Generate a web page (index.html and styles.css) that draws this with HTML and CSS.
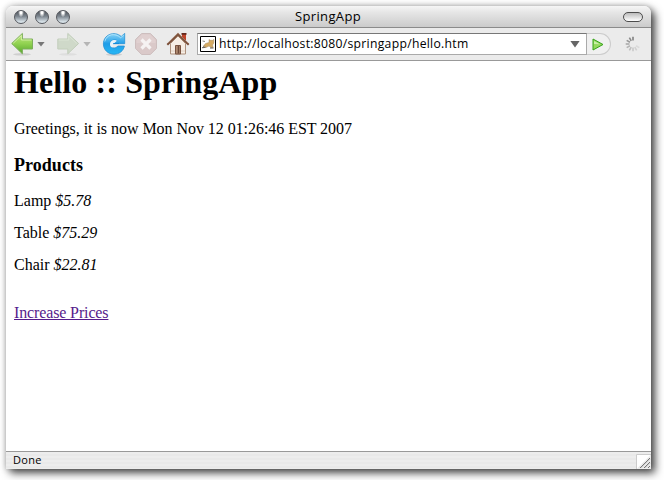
FILE: index.html
```html
<!DOCTYPE html>
<html lang="en">
<head>
<meta charset="utf-8">
<title>SpringApp</title>
<link rel="stylesheet" href="styles.css">
</head>
<body>
<div class="window">
  <header class="titlebar">
    <div class="lights"><i class="light"></i><i class="light"></i><i class="light"></i></div>
    <span class="title">SpringApp</span>
    <i class="pill"></i>
  </header>
  <nav class="toolbar">
    <svg class="icon" viewBox="0 0 24 24">
      <defs><linearGradient id="green" x1="0" y1="0" x2="0" y2="1"><stop offset="0" stop-color="#c5e985"/><stop offset=".5" stop-color="#91d251"/><stop offset="1" stop-color="#56a52c"/></linearGradient></defs>
      <ellipse cx="12" cy="22.3" rx="9" ry="1.2" fill="#cfcfcf"/>
      <path d="M1.7 11.5 12.4 1.4V7H22.5V17H12.4V21.8Z" fill="url(#green)" stroke="#7daf5c"/>
      <path d="M3.2 11.3 11.4 3.5V8H21.5" fill="none" stroke="#dcf3b0" stroke-opacity=".8"/>
    </svg>
    <i class="caret"></i>
    <svg class="icon forward" viewBox="0 0 24 24">
      <ellipse cx="12" cy="22.3" rx="9" ry="1.2" fill="#dedede"/>
      <path d="M22.6 11.5 11.8 1.4V7H1.8V17H11.8V21.8Z" fill="#cfd9c9" stroke="#c2cebb"/>
      <path d="M2.8 8H12.8V3.8L20.8 11.4" fill="none" stroke="#dce5d6"/>
    </svg>
    <i class="caret caret-off"></i>
    <svg class="icon reload" viewBox="0 0 24 24">
      <defs><linearGradient id="blue" x1="0" y1="0" x2="0" y2="1"><stop offset="0" stop-color="#8ad4f6"/><stop offset=".5" stop-color="#1f9de8"/><stop offset="1" stop-color="#27b8f5"/></linearGradient></defs>
      <ellipse cx="12" cy="22.6" rx="8" ry="1.1" fill="#cfcfcf"/>
      <path d="M22.7 1.4V11.7H11.5L15 8.5C12 6.8 8 8.8 8 12.2C8 16.4 14 17.2 15.8 14H22.4C21.4 19 17.2 22.2 12 22.2C6 22.2 1.4 17.8 1.4 12C1.4 2.6 12.2-1.6 19.2 4.5Z" fill="url(#blue)" stroke="#2490d4" stroke-width=".8"/>
      <path d="M2.8 9.5C4.3 2.2 13 .3 18.7 5.8L21.7 3" fill="none" stroke="#c6efff" stroke-opacity=".7"/>
      <path d="M15 8.7C11.6 6.9 8 9 8 12.2C8 14.2 9.2 15.3 10.8 15.6L10.7 13.4C10.7 11.9 12 11.5 13 11.4H11.8Z" fill="#e9f3f9"/>
      <path d="M11.2 11.5H17" stroke="#168ada"/>
    </svg>
    <svg class="icon stop" viewBox="0 0 24 24">
      <path d="M7.6 1.5H16.4L22.5 7.6V16.4L16.4 22.5H7.6L1.5 16.4V7.6Z" fill="#dac9c9" stroke="#cdbebe"/>
      <path d="M7.9 2.5H16L21.5 8V11H2.5V8Z" fill="#e0d0d0"/>
      <path d="M7.5 7.5 16.5 16.5M16.5 7.5 7.5 16.5" stroke="#f6f2f2" stroke-width="3.2"/>
    </svg>
    <svg class="icon home" viewBox="0 0 24 24">
      <path d="M16 1.5H20V9L16 5.5Z" fill="#c0452c"/><path d="M15.5 1H20.5V2.8H15.5Z" fill="#63291e"/>
      <path d="M4.5 11.5 12 4 19.5 11.5V22H4.5Z" fill="#f7eee5" stroke="#ae927e"/>
      <path d="M1.3 12.8 12 2.2 22.7 12.8" fill="none" stroke="#7a4d36" stroke-width="2"/>
      <path d="M2 11 12 1.2 22 11" fill="none" stroke="#b59683" stroke-width=".6"/>
      <path d="M9.5 13.5H14.5V22H9.5Z" fill="#b08a70" stroke="#795340"/><path d="M12.5 14V21.5" stroke="#6d4938" stroke-width="1.5"/>
      <path d="M5 19H9M15 19H19" stroke="#e0cfc0"/>
    </svg>
    <div class="address">
      <svg class="favicon" viewBox="0 0 16 16">
        <path d="M.5.5H15.5V15.5H.5Z" fill="#fff" stroke="#000"/>
        <path d="M2.5 5 5 5.5M2 12 5 9" stroke="#888"/>
        <path d="M3.5 10 5.5 7.5 9 6.5V3.5L10.5 4.3H12.5L13.8 3.4V7L12.5 9 13.2 11.5H11L9 10 6 11.5H3.5L5 10Z" fill="#d5ab65" stroke="#a58a65" stroke-width=".5"/>
        <path d="M2.5 11.8 5.5 11.2M10 12H13.5" stroke="#66615b"/>
      </svg>
      <span class="url">http://localhost:8080/springapp/hello.htm</span>
      <i class="caret dropdown"></i>
    </div>
    <div class="go">
      <svg class="go-icon" viewBox="0 0 12 13"><path d="M1 1 11 6.5 1 12Z" fill="#95d95e" stroke="#36a319"/><path d="M2 3V6L8 6.3Z" fill="#c9efa7"/></svg>
    </div>
    <svg class="spinner" viewBox="-8 -8 16 16" stroke-width="1.6">
      <path d="M0-3.5V-7.3" stroke="#808080"/>
      <path d="M0-3.5V-7.3" stroke="#888" transform="rotate(-30)"/>
      <path d="M0-3.5V-7.3" stroke="#999" transform="rotate(-60)"/>
      <path d="M0-3.5V-7.3" stroke="#aaa" transform="rotate(-90)"/>
      <path d="M0-3.5V-7.3" stroke="#b4b4b4" transform="rotate(-120)"/>
      <path d="M0-3.5V-7.3" stroke="#bebebe" transform="rotate(-150)"/>
      <path d="M0-3.5V-7.3" stroke="#c8c8c8" transform="rotate(180)"/>
      <path d="M0-3.5V-7.3" stroke="#d0d0d0" transform="rotate(150)"/>
      <path d="M0-3.5V-7.3" stroke="#dadada" transform="rotate(120)"/>
    </svg>
  </nav>
  <main class="page">
    <h1>Hello :: SpringApp</h1>
    <p class="greeting">Greetings, it is now Mon Nov 12 01:26:46 EST 2007</p>
    <h3>Products</h3>
    <p class="product">Lamp <i>$5.78</i></p>
    <p class="product">Table <i>$75.29</i></p>
    <p class="product">Chair <i>$22.81</i></p>
    <a class="link" href="#">Increase Prices</a>
  </main>
  <footer class="status">
    <span class="done">Done</span>
    <svg class="grip" viewBox="0 0 15 15"><path d="M.5 15V.5H15" fill="#fff" stroke="#ccc"/><path d="M4 14 14 4M8 14 14 8M12 14 14 12" stroke="#777"/><path d="M5.2 14 14 5.2M9.2 14 14 9.2" stroke="#ccc"/></svg>
  </footer>
</div>
</body>
</html>
```
FILE: styles.css
```css
* { box-sizing: border-box; }
body { margin: 0; width: 664px; height: 480px; overflow: hidden; background: #fff; }
.window {
  display: flex; flex-direction: column;
  width: 645px; height: 463px; margin: 6px 0 0 6px;
  border-radius: 7px 7px 0 0; background: #fff;
  box-shadow: 4px 4px 8px rgba(0,0,0,.7), 0 0 6px rgba(0,0,0,.25);
}
.titlebar {
  display: grid; grid-template-columns: 80px 1fr 80px; align-items: center;
  height: 22px; padding: 0 8px; border-bottom: 1px solid #8b8b8b;
  border-radius: 7px 7px 0 0; background: linear-gradient(#f6f6f6, #e6e6e6 30%, #cbcbcb);
}
.lights { display: flex; gap: 7px; }
.light {
  width: 14px; height: 14px; border: 1px solid #55585e; border-radius: 50%;
  background: radial-gradient(ellipse at 50% 8%, #fff 0 12%, transparent 34%), linear-gradient(#4d5157, #7e8790 45%, #d8e2e8 90%);
}
.title { text-align: center; font: 13px/18px "Open Sans", sans-serif; letter-spacing: .35px; color: #000; margin: -2px 0 0 -1px; }
.pill {
  justify-self: end; width: 20px; height: 10px; border: 1.5px solid #4c4c4c;
  border-radius: 5px; background: linear-gradient(#bbb, #fff);
}
.toolbar {
  display: flex; align-items: center; flex: none; height: 33px; padding-left: 4px;
  border-bottom: 1px solid #999; background: #ebebeb;
}
.icon { flex: none; width: 24px; height: 24px; }
.caret {
  flex: none; width: 8px; height: 5px; margin-left: 3px;
  background: #777; clip-path: polygon(0 0, 100% 0, 50% 100%);
}
.caret-off { background: #b5b5b5; }
.forward { margin-left: 11px; }
.reload { margin-left: 11px; }
.stop, .home { margin-left: 8px; }
.address {
  display: flex; align-items: center; flex: none; width: 390px; height: 22px; margin-left: 7px;
  padding-left: 2px; border: 1px solid #aaa; border-top: 1px solid #777; background: #fff;
}
.favicon { width: 16px; height: 16px; flex: none; }
.url { margin-left: 3px; font: 12.2px/20px "Open Sans", sans-serif; letter-spacing: .28px; white-space: nowrap; }
.dropdown { width: 10px; height: 7px; margin: 0 6px 0 auto; background: #666; }
.go {
  display: flex; align-items: center; width: 24px; height: 22px; padding-left: 5px;
  border: 1px solid #ccc; border-left: 0; border-radius: 0 11px 11px 0; background: #f0f0f0;
}
.go-icon { width: 12px; height: 13px; }
.spinner { width: 16px; height: 16px; margin-left: 14px; }
.page {
  display: flex; flex-direction: column; align-items: flex-start; flex: 1; min-height: 0;
  padding: 3px 8px 0; font: 16px/18px "Liberation Serif", serif; color: #000;
}
h1 { margin: 0; font-size: 32px; line-height: 37px; letter-spacing: .11px; }
.greeting { margin: 19px 0 0; letter-spacing: -.045px; }
h3 { margin: 17px 0 0; font-size: 18px; line-height: 21px; letter-spacing: .05px; }
.product { margin: 14px 0 0; }
h3 + .product { margin-top: 16px; }
.link { margin-top: 30px; color: #551a8b; text-decoration: underline; letter-spacing: -.13px; }
.status {
  display: flex; align-items: center; justify-content: space-between; flex: none; height: 18px;
  padding-left: 7px; border-top: 1px solid #999;
  background: repeating-linear-gradient(#ededed 0 2px, #e9e9e9 2px 4px);
}
.done { font: 11px/15px "Open Sans", sans-serif; letter-spacing: .3px; margin-top: -2px; }
.grip { width: 15px; height: 15px; align-self: flex-end; }
```
